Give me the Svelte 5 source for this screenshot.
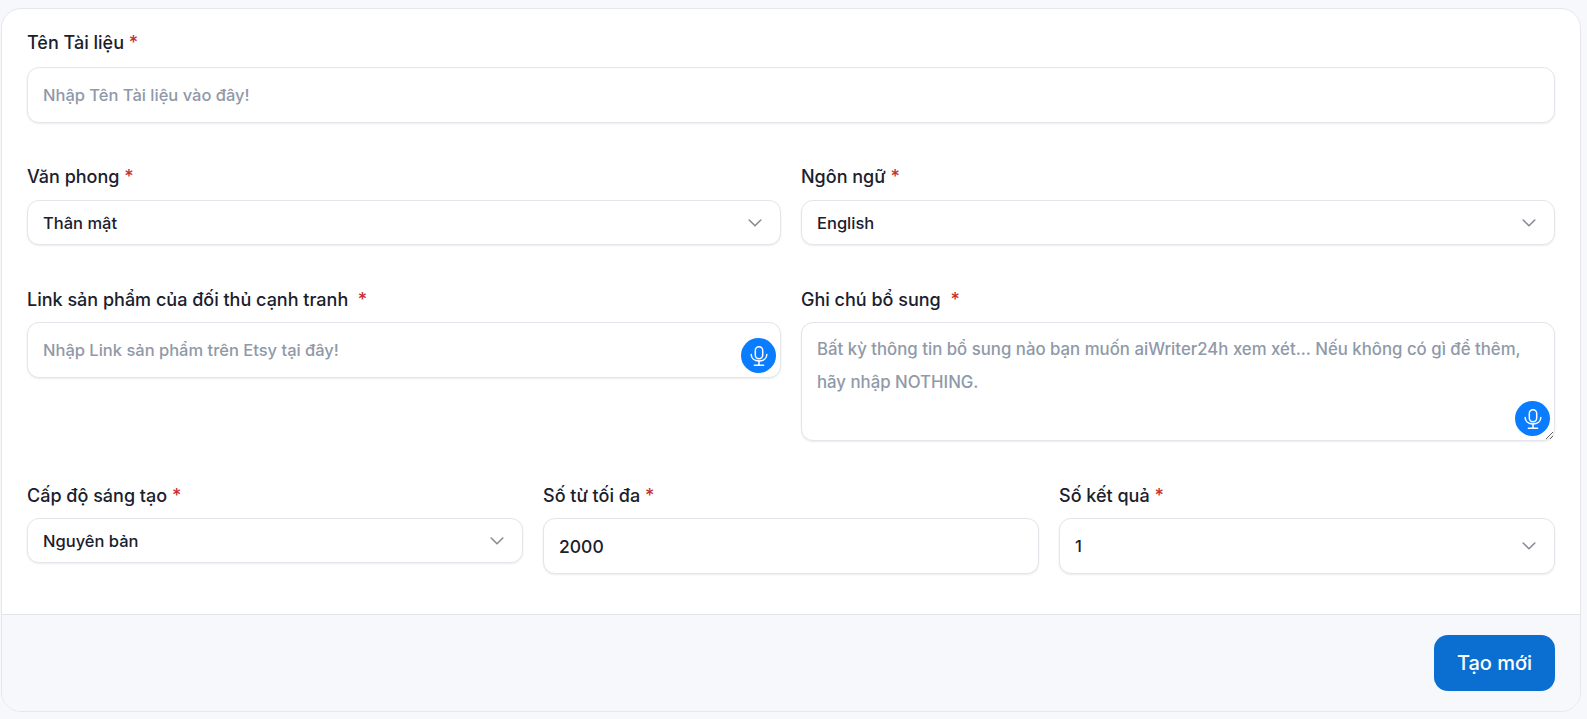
<script>
  const tones = ['Thân mật', 'Trang trọng', 'Hài hước'];
  const languages = ['English', 'Tiếng Việt'];
  const levels = ['Nguyên bản', 'Sáng tạo'];
  const counts = ['1', '2', '3'];

  let title = '';
  let link = '';
  let note = '';
  let maxWords = '2000';
</script>

{#snippet mic()}
  <button class="mic" type="button" aria-label="Ghi âm">
    <svg width="20" height="20" viewBox="0 0 20 20" fill="none" stroke="#fff" stroke-width="1.5" stroke-linecap="round">
      <rect x="6.3" y="0.8" width="7.4" height="12" rx="3.7" />
      <path d="M2.2 8.6c0 3.9 3.3 6.4 7.8 6.4s7.8-2.5 7.8-6.4" />
      <path d="M10 15v4M5.4 19.2h9.2" />
    </svg>
  </button>
{/snippet}

{#snippet select(options)}
  <div class="select">
    <select>
      {#each options as opt}
        <option>{opt}</option>
      {/each}
    </select>
    <svg class="chevron" width="16" height="16" viewBox="0 0 16 16" fill="none" stroke="#868c96" stroke-width="1.6" stroke-linecap="round" stroke-linejoin="round">
      <path d="M2.2 5 8 10.8 13.8 5" />
    </svg>
  </div>
{/snippet}

<div class="card">
  <div class="form">
    <div class="row">
      <div class="field">
        <label for="title">Tên Tài liệu <span class="req">*</span></label>
        <input id="title" bind:value={title} placeholder="Nhập Tên Tài liệu vào đây!" />
      </div>
    </div>

    <div class="row two tone">
      <div class="field">
        <label>Văn phong <span class="req">*</span></label>
        {@render select(tones)}
      </div>
      <div class="field">
        <label>Ngôn ngữ <span class="req">*</span></label>
        {@render select(languages)}
      </div>
    </div>

    <div class="row two extra">
      <div class="field">
        <label for="link">Link sản phẩm của đối thủ cạnh tranh &nbsp;<span class="req">*</span></label>
        <div class="wrap">
          <input id="link" bind:value={link} placeholder="Nhập Link sản phẩm trên Etsy tại đây!" />
          {@render mic()}
        </div>
      </div>
      <div class="field">
        <label for="note">Ghi chú bổ sung &nbsp;<span class="req">*</span></label>
        <div class="wrap">
          <textarea id="note" bind:value={note} placeholder="Bất kỳ thông tin bổ sung nào bạn muốn aiWriter24h xem xét... Nếu không có gì để thêm, hãy nhập NOTHING."></textarea>
          {@render mic()}
        </div>
      </div>
    </div>

    <div class="row three">
      <div class="field">
        <label>Cấp độ sáng tạo <span class="req">*</span></label>
        {@render select(levels)}
      </div>
      <div class="field">
        <label for="words">Số từ tối đa <span class="req">*</span></label>
        <input id="words" class="value" bind:value={maxWords} />
      </div>
      <div class="field">
        <label>Số kết quả <span class="req">*</span></label>
        <div class="tall">{@render select(counts)}</div>
      </div>
    </div>
  </div>

  <div class="footer">
    <button class="submit" type="button">Tạo mới</button>
  </div>
</div>

<style>
  :global(body) {
    background: #f6f8fc;
    font-family: Inter, "Noto Sans", sans-serif;
    color: #1a202c;
  }
  .card {
    box-sizing: border-box;
    margin: 8px 6px 0 1px;
    height: 704px;
    display: flex;
    flex-direction: column;
    background: #fff;
    border: 1px solid #e5e7eb;
    border-radius: 20px;
    overflow: hidden;
  }
  .form {
    flex: 1;
    padding: 23px 25px 0 25px;
  }
  .row {
    display: grid;
    gap: 20px;
  }
  .two { grid-template-columns: 1fr 1fr; }
  .three { grid-template-columns: 1fr 1fr 1fr; }
  .tone { margin-top: 43px; }
  .extra { margin-top: 44px; }
  .row.three { margin-top: 44px; }
  .field { min-width: 0; }
  label {
    display: block;
    font-size: 18px;
    line-height: 22px;
    font-weight: 500;
    margin-bottom: 13px;
  }
  .tone label { margin-bottom: 12px; }
  .extra label, .three label { margin-bottom: 11px; }
  .req { color: #c53030; }
  input, textarea, select {
    display: block;
    box-sizing: border-box;
    width: 100%;
    font: inherit;
    font-size: 16.5px;
    font-weight: 500;
    color: #1a202c;
    background: #fff;
    border: 1px solid #e2e5ea;
    border-radius: 12px;
    box-shadow: 0 1px 2px rgba(0, 0, 0, 0.08);
    outline: none;
  }
  input {
    height: 56px;
    padding: 0 15px;
  }
  input.value {
    font-size: 17.5px;
  }
  textarea {
    height: 119px;
    padding: 10px 15px;
    font-size: 16.8px;
    line-height: 33px;
    resize: both;
    max-width: 100%;
    vertical-align: top;
  }
  input::placeholder, textarea::placeholder {
    color: #8f99a8;
    opacity: 1;
  }
  .select { position: relative; }
  select {
    appearance: none;
    height: 45px;
    padding: 0 40px 0 15px;
  }
  .tall select { height: 56px; }
  .chevron {
    position: absolute;
    right: 18px;
    top: 50%;
    transform: translateY(-50%);
    pointer-events: none;
  }
  .wrap { position: relative; }
  .mic {
    position: absolute;
    right: 5px;
    bottom: 5px;
    width: 35px;
    height: 35px;
    padding: 0;
    display: flex;
    align-items: center;
    justify-content: center;
    border: 0;
    border-radius: 50%;
    background: #0a7cff;
  }
  .footer {
    height: 97px;
    box-sizing: border-box;
    display: flex;
    justify-content: flex-end;
    align-items: flex-start;
    padding: 20px 25px 0 0;
    background: #f6f8fc;
    border-top: 1px solid #e2e5ea;
  }
  .submit {
    width: 121px;
    height: 56px;
    border: 0;
    border-radius: 14px;
    background: #0a6fd1;
    color: #fff;
    font: inherit;
    font-size: 20px;
    font-weight: 500;
  }
</style>
